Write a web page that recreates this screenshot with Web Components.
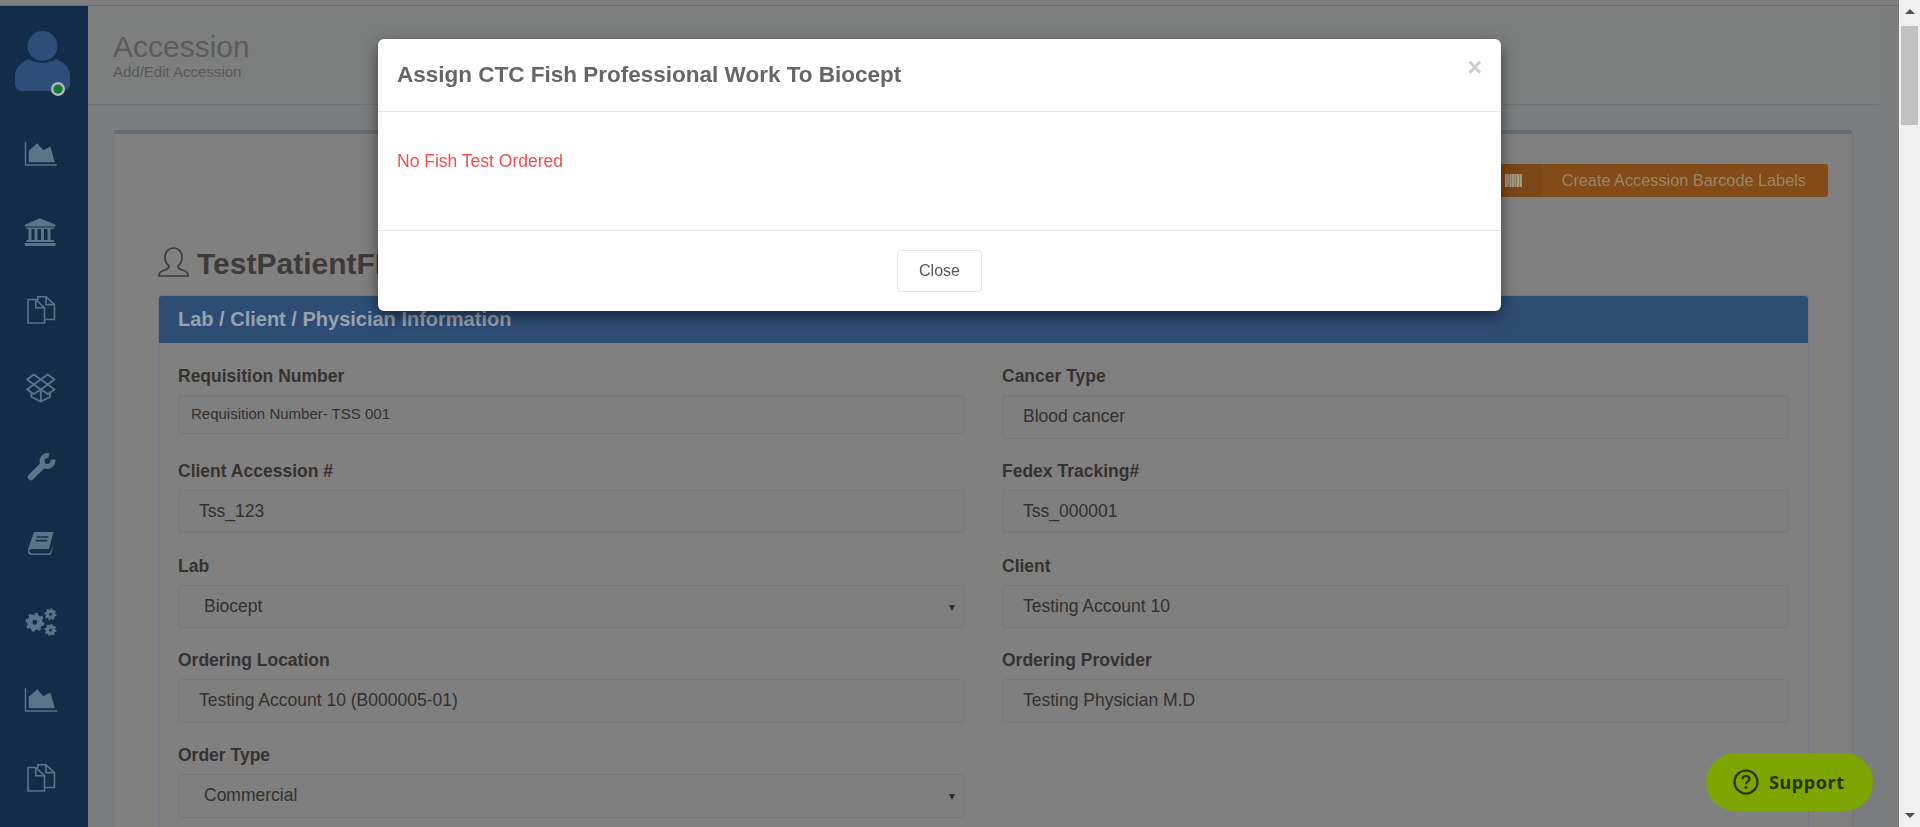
<!DOCTYPE html>
<html lang="en">
<head>
<meta charset="utf-8">
<title>Accession</title>
<style>
  html, body { margin: 0; height: 100%; overflow: hidden; background: #7c7d7e; }
  body { font-family: "Liberation Sans", Arial, sans-serif; }
</style>
</head>
<body>
<app-shell>
  <side-nav slot="nav">
    <nav-item icon="chart"></nav-item>
    <nav-item icon="bank"></nav-item>
    <nav-item icon="files"></nav-item>
    <nav-item icon="dropbox"></nav-item>
    <nav-item icon="wrench"></nav-item>
    <nav-item icon="book"></nav-item>
    <nav-item icon="cogs"></nav-item>
    <nav-item icon="chart"></nav-item>
    <nav-item icon="files"></nav-item>
  </side-nav>

  <page-header heading="Accession" sub="Add/Edit Accession"></page-header>

  <content-box>
    <barcode-button slot="actions">Create Accession Barcode Labels</barcode-button>
    <patient-name slot="actions">TestPatientFName</patient-name>
    <section-panel heading="Lab / Client / Physician Information">
      <form-field label="Requisition Number" small>Requisition Number- TSS 001</form-field>
      <form-field label="Cancer Type">Blood cancer</form-field>
      <form-field label="Client Accession #">Tss_123</form-field>
      <form-field label="Fedex Tracking#">Tss_000001</form-field>
      <form-field label="Lab" select>Biocept</form-field>
      <form-field label="Client">Testing Account 10</form-field>
      <form-field label="Ordering Location">Testing Account 10 (B000005-01)</form-field>
      <form-field label="Ordering Provider">Testing Physician M.D</form-field>
      <form-field label="Order Type" select>Commercial</form-field>
    </section-panel>
  </content-box>

  <support-button slot="overlay">Support</support-button>
  <modal-dialog slot="overlay" heading="Assign CTC Fish Professional Work To Biocept">No Fish Test Ordered</modal-dialog>
</app-shell>

<script>
class AppShell extends HTMLElement {
    constructor() {
        super();
        this.attachShadow({ mode: 'open' });
        this.shadowRoot.innerHTML = `
            <style>
                :host {
                    display: flex;
                    width: 1920px;
                    height: 827px;
                    overflow: hidden;
                }
                .page {
                    flex: 1;
                    min-width: 0;
                    display: flex;
                    flex-direction: column;
                }
                .strip {
                    height: 6px;
                    box-sizing: border-box;
                    flex: none;
                    background: #7e7e7e;
                    border-bottom: 1px solid #6d6e70;
                }
                .row {
                    flex: 1;
                    min-height: 0;
                    display: flex;
                }
                .main {
                    flex: 1;
                    min-width: 0;
                    display: flex;
                    flex-direction: column;
                }
                .bar {
                    flex: none;
                    width: 21px;
                    background: #f1f1f1;
                    display: flex;
                    flex-direction: column;
                    align-items: center;
                }
                .bar .up, .bar .down {
                    width: 0;
                    height: 0;
                    border-left: 5px solid transparent;
                    border-right: 5px solid transparent;
                    flex: none;
                }
                .bar .up {
                    margin-top: 9px;
                    border-bottom: 5px solid #505050;
                }
                .bar .thumb {
                    width: 17px;
                    height: 99px;
                    margin-top: 12px;
                    background: #c1c1c1;
                }
                .bar .down {
                    margin-top: auto;
                    margin-bottom: 9px;
                    border-top: 5px solid #505050;
                }
            </style>
            <div class="page">
                <div class="strip"></div>
                <div class="row">
                    <slot name="nav"></slot>
                    <div class="main"><slot></slot></div>
                </div>
            </div>
            <div class="bar">
                <div class="up"></div>
                <div class="thumb"></div>
                <div class="down"></div>
            </div>
            <slot name="overlay"></slot>
        `;
    }
}

class SideNav extends HTMLElement {
    constructor() {
        super();
        this.attachShadow({ mode: 'open' });
        this.shadowRoot.innerHTML = `
            <style>
                :host {
                    display: block;
                    flex: none;
                    width: 88px;
                    background: #122c4a;
                }
                .avatar {
                    height: 109px;
                    display: block;
                }
            </style>
            <svg class="avatar" width="88" height="109" viewBox="0 0 88 109">
                <circle cx="42.5" cy="40" r="15" fill="#2c4e78"/>
                <path d="M15 78V70C15 62 20 57 29 53C35 58 50 58 56 53C65 57 70 62 70 70V78C70 82 67 85 63 85H22C18 85 15 82 15 78Z" fill="#2c4e78"/>
                <circle cx="58" cy="83" r="7" fill="#b5b5b5"/>
                <circle cx="58" cy="83" r="4.6" fill="#0f7a30"/>
            </svg>
            <slot></slot>
        `;
    }
}

function gear(cx, cy, r) {
    return `
        <circle cx="${cx}" cy="${cy}" r="${r * 0.86}" fill="none" stroke="currentColor" stroke-width="${r * 0.28}" pathLength="16" stroke-dasharray="1 1"/>
        <circle cx="${cx}" cy="${cy}" r="${r * 0.54}" fill="none" stroke="currentColor" stroke-width="${r * 0.56}"/>`;
}

const NAV_ICONS = {
    chart: `<path d="M1.5 5V28H33" fill="none" stroke="currentColor" stroke-width="1.5"/>
            <path d="M4.8 25.3V13.7L13.2 6.3L19.2 13L26.5 9.7L30.8 25.3Z" fill="currentColor"/>`,
    bank: `<path d="M15.8 3.3L31.5 9.8V11.6H0.8V9.8Z" fill="currentColor"/>
           <path d="M2.5 12.6H30V14H2.5ZM4.5 14H7.5V25H4.5ZM10.5 14H13.5V25H10.5ZM17 14H20V25H17ZM23.5 14H26.5V25H23.5ZM2.5 25H30V27H2.5ZM0.8 28H31.5V31H0.8Z" fill="currentColor"/>`,
    files: `<g fill="none" stroke="currentColor" stroke-width="1.6">
                <path d="M11.8 6.5H4V30H20.5V14.8Z"/>
                <path d="M11.8 6.5V14.8H20.5"/>
                <path d="M13.8 7V3.8H22L30.5 11.6V26.5H21"/>
                <path d="M22 3.8V11.6H30.5"/>
            </g>`,
    dropbox: `<g fill="none" stroke="currentColor" stroke-width="1.9" stroke-linejoin="round">
                <path d="M9.8 3.5L16.8 8.5L9.8 13.5L3 8.5Z"/>
                <path d="M23.8 3.5L30.6 8.5L23.8 13.5L16.8 8.5Z"/>
                <path d="M9.8 13.5L16.8 18.5L9.8 23L3 18.5Z"/>
                <path d="M23.8 13.5L30.6 18.5L23.8 23L16.8 18.5Z"/>
                <path d="M7.5 22V26L16.8 30.5L26 26V22M16.8 18.5V30.5"/>
              </g>`,
    wrench: `<path d="M7 28L18 17" fill="none" stroke="currentColor" stroke-width="6.5" stroke-linecap="round"/>
             <path d="M28.8 10.6A5.5 5.5 0 1 1 24.9 6.7" fill="none" stroke="currentColor" stroke-width="5"/>`,
    book: `<path d="M10 5H29.5L25 22H8C6.4 22 5 23 4 24.5V22.5Z" fill="currentColor"/>
           <path d="M12.8 10H24.2M11.8 13.6H23.2" stroke="#122c4a" stroke-width="1.6"/>
           <path d="M29.5 18L26.5 28H8C5.5 28 3.8 26.6 4 24.5C4.2 23.6 5.6 24 6 25C6.4 26 7 26.4 8 26.4H25.4" fill="currentColor"/>`,
    cogs: gear(10.8, 17.3, 9.5) + gear(26.5, 9.3, 6) + gear(26.5, 25, 6)
};

class NavItem extends HTMLElement {
    constructor() {
        super();
        this.attachShadow({ mode: 'open' });
    }

    connectedCallback() {
        this.shadowRoot.innerHTML = `
            <style>
                :host {
                    display: flex;
                    height: 78px;
                    align-items: center;
                    justify-content: center;
                    padding-right: 7px;
                    color: #5c7488;
                }
            </style>
            <svg width="34" height="34" viewBox="0 0 34 34">${NAV_ICONS[this.getAttribute('icon')]}</svg>
        `;
    }
}

class PageHeader extends HTMLElement {
    constructor() {
        super();
        this.attachShadow({ mode: 'open' });
    }

    connectedCallback() {
        this.shadowRoot.innerHTML = `
            <style>
                :host {
                    display: block;
                    flex: none;
                    height: 72px;
                    margin-right: 20px;
                    padding: 26px 0 0 25px;
                    background: #7d7f7e;
                    border-bottom: 1px solid #6f7278;
                }
                h1 {
                    margin: 0 0 3px;
                    font-size: 30px;
                    line-height: 30px;
                    font-weight: 400;
                    color: #5d5b59;
                }
                p {
                    margin: 0;
                    font-size: 15px;
                    line-height: 14px;
                    color: #5a5856;
                }
            </style>
            <h1>${this.getAttribute('heading')}</h1>
            <p>${this.getAttribute('sub')}</p>
        `;
    }
}

class ContentBox extends HTMLElement {
    constructor() {
        super();
        this.attachShadow({ mode: 'open' });
        this.shadowRoot.innerHTML = `
            <style>
                :host {
                    display: block;
                    flex: none;
                    margin: 25px 46px 0 25px;
                    height: 800px;
                    background: #808080;
                    border: 1px solid #71777c;
                    border-top: 4px solid #636d73;
                    border-radius: 4px 4px 0 0;
                    box-sizing: border-box;
                    padding: 30px 43px 0 44px;
                }
                .actions {
                    display: flex;
                    flex-direction: column;
                }
            </style>
            <div class="actions"><slot name="actions"></slot></div>
            <slot></slot>
        `;
    }
}

class BarcodeButton extends HTMLElement {
    constructor() {
        super();
        this.attachShadow({ mode: 'open' });
        this.shadowRoot.innerHTML = `
            <style>
                :host {
                    display: flex;
                    align-self: flex-end;
                    height: 33px;
                    margin-right: -19px;
                    background: #824b17;
                    border-radius: 3px;
                    color: #97876a;
                    font-size: 16.3px;
                    line-height: 33px;
                }
                .icon {
                    width: 75px;
                    background: #7b4716;
                    display: flex;
                    align-items: center;
                    justify-content: flex-end;
                    padding-right: 20px;
                    box-sizing: border-box;
                    border-radius: 3px 0 0 3px;
                }
                .label {
                    padding: 0 22px 0 20px;
                    white-space: nowrap;
                }
            </style>
            <div class="icon">
                <svg width="17" height="13" viewBox="0 0 17 13">
                    <rect width="17" height="13" fill="#8f7a58"/>
                    <path d="M0 0H1.5V13H0ZM2.5 0H3.5V13H2.5ZM5 0H6V13H5ZM7 0H9V13H7ZM10 0H11V13H10ZM12 0H14V13H12ZM15 0H17V13H15Z" fill="#a89a80"/>
                </svg>
            </div>
            <div class="label"><slot></slot></div>
        `;
    }
}

class PatientName extends HTMLElement {
    constructor() {
        super();
        this.attachShadow({ mode: 'open' });
        this.shadowRoot.innerHTML = `
            <style>
                :host {
                    display: flex;
                    align-items: center;
                    gap: 8px;
                    height: 30px;
                    margin: 50px 0 18px;
                    font-size: 30px;
                    font-weight: 700;
                    color: #3d3a39;
                }
                .text { padding-top: 3px; }
            </style>
            <svg width="31" height="30" viewBox="0 0 31 30">
                <path d="M15.5 1C20.5 1 24 5 24 10C24 14 22 17.5 20 19C20 21 21 22 24 23C27.5 24 30 25.5 30 27.5V29H1V27.5C1 25.5 3.5 24 7 23C10 22 11 21 11 19C9 17.5 7 14 7 10C7 5 10.5 1 15.5 1Z" fill="none" stroke="#3d3a39" stroke-width="1.7"/>
            </svg>
            <div class="text"><slot></slot></div>
        `;
    }
}

class SectionPanel extends HTMLElement {
    constructor() {
        super();
        this.attachShadow({ mode: 'open' });
    }

    connectedCallback() {
        this.shadowRoot.innerHTML = `
            <style>
                :host {
                    display: block;
                    border: 1px solid #71787f;
                    border-radius: 4px 4px 0 0;
                }
                header {
                    height: 47px;
                    padding-left: 19px;
                    background: #2d4d75;
                    color: #98a2ae;
                    font-size: 20px;
                    font-weight: 700;
                    line-height: 47px;
                    border-radius: 3px 3px 0 0;
                }
                .body {
                    display: grid;
                    grid-template-columns: 1fr 1fr;
                    grid-auto-rows: 94.75px;
                    column-gap: 37px;
                    padding: 23px 19px 0;
                }
            </style>
            <header>${this.getAttribute('heading')}</header>
            <div class="body"><slot></slot></div>
        `;
    }
}

class FormField extends HTMLElement {
    constructor() {
        super();
        this.attachShadow({ mode: 'open' });
    }

    connectedCallback() {
        const arrow = this.hasAttribute('select') ? '<span class="arrow"></span>' : '';
        this.shadowRoot.innerHTML = `
            <style>
                :host {
                    display: block;
                    color: #33302f;
                }
                label {
                    display: block;
                    height: 20px;
                    margin-bottom: 9px;
                    font-size: 17.5px;
                    font-weight: 700;
                    line-height: 20px;
                    color: #353231;
                }
                .control {
                    position: relative;
                    box-sizing: border-box;
                    height: 43.5px;
                    padding-left: 20px;
                    background: #7f7f7f;
                    border: 1px solid #73797e;
                    border-radius: 4px;
                    font-size: 17.5px;
                    line-height: 41.5px;
                }
                :host([select]) .control { padding-left: 25px; }
                :host([small]) .control {
                    height: 38.5px;
                    padding-left: 12px;
                    font-size: 15px;
                    line-height: 36.5px;
                }
                .arrow {
                    position: absolute;
                    right: 9px;
                    top: 19px;
                    width: 0;
                    height: 0;
                    border-left: 3.5px solid transparent;
                    border-right: 3.5px solid transparent;
                    border-top: 6px solid #2b2b2b;
                }
            </style>
            <label>${this.getAttribute('label')}</label>
            <div class="control"><slot></slot>${arrow}</div>
        `;
    }
}

class SupportButton extends HTMLElement {
    constructor() {
        super();
        this.attachShadow({ mode: 'open' });
        this.shadowRoot.innerHTML = `
            <style>
                :host {
                    position: fixed;
                    left: 1706px;
                    top: 753px;
                    width: 167px;
                    height: 58px;
                    box-sizing: border-box;
                    padding-left: 27px;
                    display: flex;
                    align-items: center;
                    gap: 10px;
                    border-radius: 29px;
                    background: #7ca500;
                    color: #273300;
                    font-family: "Noto Sans", sans-serif;
                    font-size: 18px;
                    font-weight: 700;
                    letter-spacing: 0.6px;
                }
            </style>
            <svg width="26" height="26" viewBox="0 0 26 26">
                <circle cx="13" cy="13" r="11.5" fill="none" stroke="#273300" stroke-width="2.2"/>
                <path d="M9.5 10.2C9.5 8.2 11 7 13 7C15 7 16.5 8.2 16.5 10C16.5 12.4 13 12.4 13 15.2" fill="none" stroke="#273300" stroke-width="2.2"/>
                <circle cx="13" cy="18.5" r="1.4" fill="#273300"/>
            </svg>
            <slot></slot>
        `;
    }
}

class ModalDialog extends HTMLElement {
    constructor() {
        super();
        this.attachShadow({ mode: 'open' });
    }

    connectedCallback() {
        this.shadowRoot.innerHTML = `
            <style>
                :host {
                    position: fixed;
                    left: 378px;
                    top: 39px;
                    width: 1123px;
                    height: 272px;
                    display: flex;
                    flex-direction: column;
                    background: #fff;
                    border-radius: 6px;
                    box-shadow: 0 5px 15px rgba(0,0,0,.5);
                }
                header {
                    position: relative;
                    flex: none;
                    height: 73px;
                    box-sizing: border-box;
                    padding: 0 19px;
                    border-bottom: 1px solid #e5e5e5;
                    font-size: 22.5px;
                    font-weight: 700;
                    line-height: 72px;
                    color: #666;
                }
                .close {
                    position: absolute;
                    right: 19px;
                    top: 16px;
                    font-size: 25px;
                    line-height: 24px;
                    color: #ccc;
                }
                .body {
                    flex: none;
                    height: 118px;
                    box-sizing: border-box;
                    padding: 39px 19px 0;
                    font-size: 17.5px;
                    line-height: 20px;
                    color: #f54d4d;
                }
                footer {
                    flex: 1;
                    border-top: 1px solid #e5e5e5;
                    display: flex;
                    justify-content: center;
                    padding-top: 19px;
                }
                button {
                    width: 85px;
                    height: 42px;
                    background: #fff;
                    border: 1px solid #e6e6e6;
                    border-radius: 4px;
                    font: 16px "Liberation Sans", Arial, sans-serif;
                    color: #555;
                }
            </style>
            <header>${this.getAttribute('heading')}<span class="close">×</span></header>
            <div class="body"><slot></slot></div>
            <footer><button>Close</button></footer>
        `;
    }
}

customElements.define('app-shell', AppShell);
customElements.define('side-nav', SideNav);
customElements.define('nav-item', NavItem);
customElements.define('page-header', PageHeader);
customElements.define('content-box', ContentBox);
customElements.define('barcode-button', BarcodeButton);
customElements.define('patient-name', PatientName);
customElements.define('section-panel', SectionPanel);
customElements.define('form-field', FormField);
customElements.define('support-button', SupportButton);
customElements.define('modal-dialog', ModalDialog);
</script>
</body>
</html>
